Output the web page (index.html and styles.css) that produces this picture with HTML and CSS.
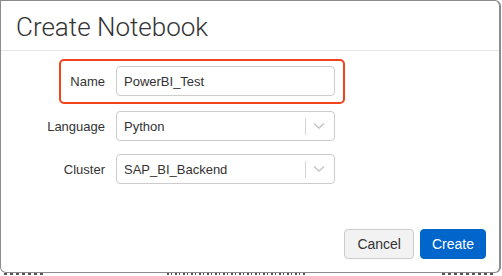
FILE: index.html
```html
<!DOCTYPE html>
<html lang="en">
<head>
    <meta charset="UTF-8">
    <title>Create Notebook</title>
    <link rel="stylesheet" href="styles.css">
</head>
<body>
    <div class="modal">
        <div class="modal-header">
            <h1>Create Notebook</h1>
        </div>
        <div class="modal-body">
            <div class="highlight">
                <div class="row">
                    <label>Name</label>
                    <div class="field"><span>PowerBI_Test</span></div>
                </div>
            </div>
            <div class="row">
                <label>Language</label>
                <div class="field select">
                    <span>Python</span>
                    <span class="sep"></span>
                    <svg class="chevron" width="12" height="8" viewBox="0 0 12 8"><path d="M1 1.5 L6 6 L11 1.5" fill="none" stroke="#c4c4c4" stroke-width="1.4"/></svg>
                </div>
            </div>
            <div class="row">
                <label>Cluster</label>
                <div class="field select">
                    <span>SAP_BI_Backend</span>
                    <span class="sep"></span>
                    <svg class="chevron" width="12" height="8" viewBox="0 0 12 8"><path d="M1 1.5 L6 6 L11 1.5" fill="none" stroke="#c4c4c4" stroke-width="1.4"/></svg>
                </div>
            </div>
        </div>
        <div class="modal-footer">
            <button class="btn">Cancel</button>
            <button class="btn primary">Create</button>
        </div>
    </div>
    <!-- table rows behind the dialog, only their top edge shows -->
    <div class="behind">
        <span class="cell"></span>
        <span class="cell mid"></span>
        <span class="cell end"></span>
    </div>
</body>
</html>
```

FILE: styles.css
```css
* {
    margin: 0;
    padding: 0;
    box-sizing: border-box;
}

body {
    font-family: 'Liberation Sans', Arial, sans-serif;
    background: #ffffff;
    color: #333;
    width: 502px;
    height: 276px;
    overflow: hidden;
}

.modal {
    width: 501px;
    height: 273px;
    background: #fff;
    border: 1px solid #8c8c8c;
    border-width: 1px 2px 1px 1px;
    border-radius: 0 6px 6px 6px;
    display: flex;
    flex-direction: column;
}

.modal-header {
    height: 50px;
    border-bottom: 1px solid #e5e5e5;
    padding: 10px 15px 0;
}

.modal-header h1 {
    font-family: Roboto, 'Liberation Sans', sans-serif;
    font-weight: 300;
    font-size: 26px;
    line-height: 32px;
    color: #333;
}

.modal-body {
    padding: 8px 0 0 46px;
    display: flex;
    flex-direction: column;
    flex: 1;
}

.highlight {
    width: 286px;
    height: 45px;
    margin-left: 12px;
    border: 2px solid #f2441c;
    border-radius: 5px;
    padding-top: 5px;
    margin-bottom: 7px;
}

.highlight .row {
    margin-left: -14px;
}

.row {
    display: flex;
    align-items: center;
    gap: 11px;
}

.row + .row {
    margin-top: 13px;
}

.row label {
    width: 58px;
    text-align: right;
    font-size: 13px;
    color: #333;
}

.field {
    width: 219px;
    height: 30px;
    border: 1px solid #ccc;
    border-radius: 4px;
    display: flex;
    align-items: center;
    padding: 0 7px;
    font-size: 13px;
    color: #333;
}

.field span:first-child {
    flex: 1;
}

.select .sep {
    width: 1px;
    height: 17px;
    background: #d6d6d6;
    margin-right: 7px;
}

.chevron {
    margin-right: 2px;
}

.modal-footer {
    display: flex;
    justify-content: flex-end;
    gap: 6px;
    padding: 0 13px 13px 0;
}

.btn {
    height: 30px;
    padding: 0 12px;
    font-family: 'Liberation Sans', Arial, sans-serif;
    font-size: 14px;
    border: 1px solid #ccc;
    border-radius: 4px;
    background: #f2f2f2;
    color: #333;
}

.btn.primary {
    padding: 0 11px;
    background: #0066cc;
    border-color: #0066cc;
    color: #fff;
}

.behind {
    height: 3px;
    display: flex;
}

.cell {
    margin-left: 4px;
    width: 40px;
    height: 2px;
    background: repeating-linear-gradient(90deg, #555 0 3px, transparent 3px 6px);
}

.cell.mid {
    margin-left: 123px;
    width: 140px;
    background: repeating-linear-gradient(90deg, #555 0 2px, transparent 2px 4px, #555 4px 5px, transparent 5px 8px);
}

.cell.end {
    margin-left: 135px;
    width: 52px;
}
```
